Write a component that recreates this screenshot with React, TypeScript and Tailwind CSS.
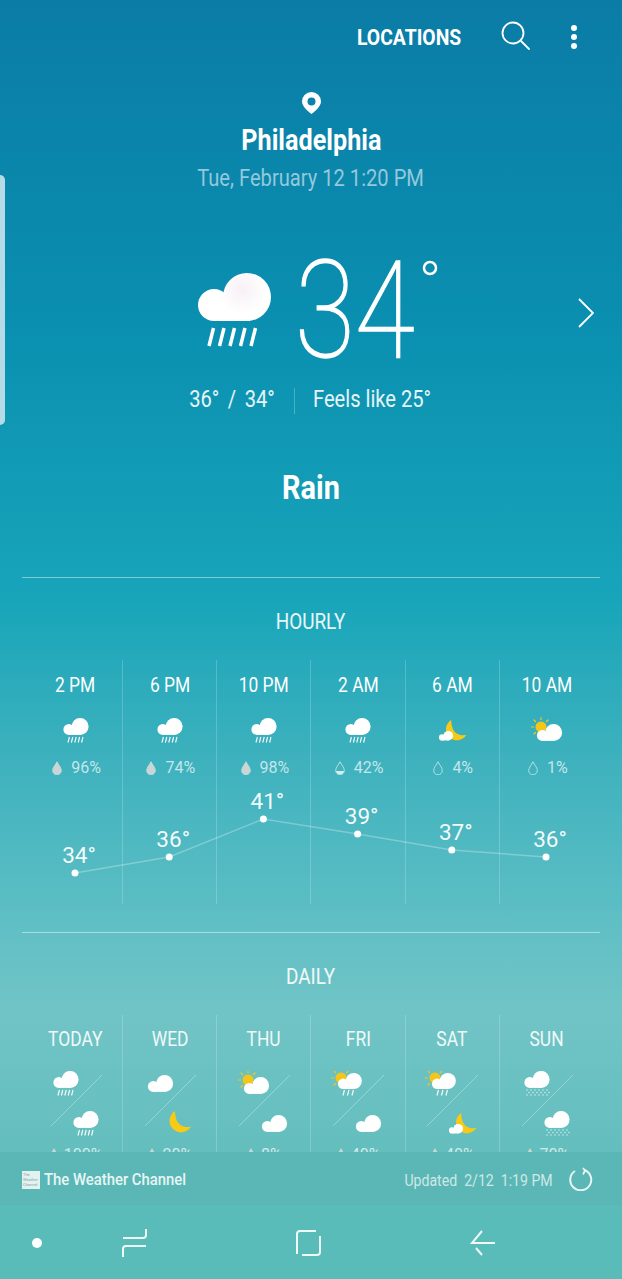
import type { ReactNode } from "react";

const hourly = [
  { time: "2 PM", icon: "rain", rain: "96%", drop: "full", temp: 34, y: 213 },
  { time: "6 PM", icon: "rain", rain: "74%", drop: "full", temp: 36, y: 197 },
  { time: "10 PM", icon: "rain", rain: "98%", drop: "full", temp: 41, y: 159 },
  { time: "2 AM", icon: "rain", rain: "42%", drop: "half", temp: 39, y: 174 },
  { time: "6 AM", icon: "moonCloud", rain: "4%", drop: "empty", temp: 37, y: 190 },
  { time: "10 AM", icon: "sunCloud", rain: "1%", drop: "empty", temp: 36, y: 197 },
];

const daily = [
  { day: "TODAY", top: "rain", bottom: "rain", rain: "100%" },
  { day: "WED", top: "cloud", bottom: "moon", rain: "20%" },
  { day: "THU", top: "sunCloud", bottom: "cloud", rain: "8%" },
  { day: "FRI", top: "sunRain", bottom: "cloud", rain: "40%" },
  { day: "SAT", top: "sunRain", bottom: "moonCloud", rain: "40%" },
  { day: "SUN", top: "snow", bottom: "snow", rain: "70%" },
];

// cloud drawn around a 25 wide, 17 high box
function Cloud({ x = 0, y = 0, s = 1 }: { x?: number; y?: number; s?: number }) {
  return (
    <g transform={`translate(${x} ${y}) scale(${s})`} fill="#fff">
      <circle cx="5.4" cy="11.4" r="5.5" />
      <circle cx="16.6" cy="8.4" r="8.5" />
      <rect x="5.4" y="9" width="12" height="7.900" />
    </g>
  );
}

function Sun({ x, y }: { x: number; y: number }) {
  return (
    <g transform={`translate(${x} ${y})`}>
      <circle cx="0" cy="0" r="5.500" fill="#f5c518" />
      <g stroke="#f5c518" strokeWidth="1.2" strokeLinecap="round">
        <path d="M0 -7.500V-9.500M-5.500 -5.500L-7 -7M5.500 -5.500L7 -7M-7.500 0H-9.500M-5.500 5.500L-7 7" />
      </g>
    </g>
  );
}

function Moon({ x, y, s = 1 }: { x: number; y: number; s?: number }) {
  return (
    <path
      transform={`translate(${x} ${y}) scale(${s})`}
      d="M6 0A11.500 11.500 0 1 0 22 15.500C15.500 17.500 10 14 8 10C6.500 6.500 6 3 6 0Z"
      fill="#f7cb15"
    />
  );
}

function Rain({ x, y, n = 5, gap = 3.4 }: { x: number; y: number; n?: number; gap?: number }) {
  return (
    <g stroke="#fff" strokeWidth="1.100" transform={`translate(${x} ${y})`}>
      {Array.from({ length: n }).map((_, i) => (
        <path key={i} d={`M${i * gap + 1} 5.500L${i * gap + 2.400} 0`} />
      ))}
    </g>
  );
}

function Glyph({ kind, x, y }: { kind: string; x: number; y: number }) {
  // x, y is the top left of a 32 x 32 cell
  let body: ReactNode = null;
  if (kind === "rain") {
    body = (
      <>
        <Cloud x={3.500} y={4} />
        <Rain x={7} y={23} />
      </>
    );
  }
  if (kind === "cloud") body = <Cloud x={4} y={8} />;
  if (kind === "moon") body = <Moon x={5} y={4} />;
  if (kind === "moonCloud") {
    body = (
      <>
        <Moon x={9.500} y={6} s={0.95} />
        <Cloud x={3} y={17} s={0.56} />
      </>
    );
  }
  if (kind === "sunCloud") {
    body = (
      <>
        <Sun x={10} y={13} />
        <Cloud x={6} y={10} />
      </>
    );
  }
  if (kind === "sunRain") {
    body = (
      <>
        <Sun x={9} y={11} />
        <Cloud x={6} y={6} s={0.95} />
        <Rain x={10} y={23} n={3} gap={4.500} />
      </>
    );
  }
  if (kind === "snow") {
    body = (
      <>
        <Cloud x={3.500} y={4} />
        <g fill="#fff" opacity="0.85">
          {[0, 1, 2, 3, 4, 5].map((i) => (
            <g key={i}>
              <circle cx={6 + i * 4} cy={23} r="0.65" />
              <circle cx={6 + i * 4} cy={28} r="0.65" />
              <circle cx={8 + i * 4} cy={25.500} r="0.65" />
            </g>
          ))}
        </g>
      </>
    );
  }
  return <g transform={`translate(${x} ${y})`}>{body}</g>;
}

function Drop({ type }: { type: string }) {
  const d = "M5 0.800C6.500 4 9.300 6.500 9.300 9.500A4.300 4.300 0 0 1 0.700 9.500C0.700 6.500 3.500 4 5 0.800Z";
  return (
    <svg width="10" height="14" viewBox="0 0 10 14">
      {type === "full" && <path d={d} fill="#c9d6d6" />}
      {type === "half" && <path d="M0.800 10H9.200A4.300 4.300 0 0 1 0.800 10Z" fill="#d4eeee" />}
      <path d={d} fill="none" stroke={type === "full" ? "#c9d6d6" : "#b4e0e4"} strokeWidth="1" />
    </svg>
  );
}

function SectionTitle({ children }: { children: ReactNode }) {
  return (
    <div className="h-[88px] border-t border-white/45 mx-[22px] flex justify-center pt-[30px]">
      <span className="inline-block font-['Roboto'] text-[22px] leading-[28px] text-white/90 scale-x-[.86] whitespace-nowrap">
        {children}
      </span>
    </div>
  );
}

function HourlyChart() {
  const points = hourly.map((h, i) => `${46 + i * 94.2},${h.y}`).join(" ");
  return (
    <div className="relative ml-[29px] mr-[28px] h-[244px] grid grid-cols-6">
      <svg className="absolute left-0 top-0 pointer-events-none" width="566" height="244">
        <polyline points={points} fill="none" stroke="#ffffff" strokeOpacity="0.28" strokeWidth="1.500" />
        {hourly.map((h, i) => (
          <circle key={h.time} cx={46 + i * 94.2} cy={h.y} r="3.500" fill="#fff" />
        ))}
      </svg>
      {hourly.map((h, i) => (
        <div key={h.time} className={`flex flex-col items-center pt-[13px] ${i < 5 ? "border-r border-white/20" : ""}`}>
          <span className="inline-block font-['Roboto'] text-[20px] leading-[24px] text-white scale-x-[.87] whitespace-nowrap">{h.time}</span>
          <svg width="32" height="32" viewBox="0 0 32 32" className="mt-[17px]">
            <Glyph kind={h.icon} x={0} y={0} />
          </svg>
          <div className="mt-[12px] flex items-center gap-[9px] h-[20px] ml-[2px]">
            <Drop type={h.drop} />
            <span className="font-['Roboto'] text-[16px] leading-[20px] text-white/70">{h.rain}</span>
          </div>
        </div>
      ))}
      {hourly.map((h, i) => (
        <span
          key={h.temp + h.time}
          className="absolute w-[94px] text-center font-['Roboto'] text-[22.500px] leading-[26px] text-white/95"
          style={{ left: i * 94.2 + 3, top: h.y - 31 }}
        >
          {h.temp}°
        </span>
      ))}
    </div>
  );
}

function DailyRow() {
  return (
    <div className="ml-[29px] mr-[28px] grid grid-cols-6">
      {daily.map((d, i) => (
        <div key={d.day} className={`flex flex-col items-center pt-[12px] h-[150px] ${i < 5 ? "border-r border-white/20" : ""}`}>
          <span className="inline-block font-['Roboto'] text-[20px] leading-[24px] text-white/90 scale-x-[.87] whitespace-nowrap">{d.day}</span>
          <svg width="72" height="72" viewBox="0 0 72 72" className="mt-[20px]">
            <path d="M11 55L62 4" stroke="#fff" strokeOpacity="0.3" strokeWidth="1" />
            <Glyph kind={d.top} x={10} y={-4} />
            <Glyph kind={d.bottom} x={30} y={36} />
          </svg>
          <div className="flex items-center gap-[5px] mt-[2px]">
            <Drop type="full" />
            <span className="font-['Roboto'] text-[16px] leading-[20px] text-white/70">{d.rain}</span>
          </div>
        </div>
      ))}
    </div>
  );
}

export default function App() {
  return (
    <div className="relative w-[622px] h-[1279px] overflow-hidden flex flex-col bg-[linear-gradient(180deg,#0b7ca6_0%,#0a8fb0_25%,#18a5ba_47%,#3ab0bd_58%,#5fbfc5_72%,#71c4c6_79%,#62bdbc_92%)] font-['Roboto']">
      {/* edge handle */}
      <div className="absolute left-0 top-[175px] w-[5px] h-[250px] rounded-r-[5px] bg-[#b5dbe6]" />

      <div className="flex-1 overflow-hidden">
        <div className="h-[74px] flex items-center justify-end pr-[44px]">
          <span className="inline-block font-['Roboto'] font-bold text-[22.500px] text-white scale-x-[.86] origin-right mr-[40px] whitespace-nowrap translate-y-[1px]">LOCATIONS</span>
          <svg width="30" height="30" viewBox="0 0 30 30" fill="none" stroke="#fff" strokeWidth="1.800" className="mr-[39px] -translate-y-[1px]">
            <circle cx="12" cy="12" r="10.500" />
            <path d="M20 20L28 28" strokeLinecap="round" />
          </svg>
          <svg width="8" height="26" viewBox="0 0 8 26" fill="#fff">
            <circle cx="4" cy="4" r="3" />
            <circle cx="4" cy="13" r="3" />
            <circle cx="4" cy="22" r="3" />
          </svg>
        </div>

        <div className="flex flex-col items-center">
          <svg width="19" height="22" viewBox="0 0 19 22" className="mt-[18px]">
            <path
              fillRule="evenodd"
              d="M9.500 0A9.500 9.500 0 0 1 19 9.500C19 14 14 18.500 9.500 22C5 18.500 0 14 0 9.500A9.500 9.500 0 0 1 9.500 0ZM9.500 5.500A4 4 0 1 0 9.500 13.500A4 4 0 1 0 9.500 5.500Z"
              fill="#fff"
            />
          </svg>
          <span className="mt-[8px] inline-block font-['Roboto'] font-bold text-[30px] leading-[36px] text-white scale-x-[.84] whitespace-nowrap">Philadelphia</span>
          <span className="mt-[3px] mb-[-1px] inline-block font-['Roboto'] text-[23px] leading-[36px] text-[#93c9dc] scale-x-[.875] whitespace-nowrap">Tue, February 12 1:20 PM</span>
        </div>

        <div className="relative h-[120px] mt-[54px]">
          <svg width="73" height="76" viewBox="0 0 73 76" className="absolute left-[198px] top-[23px]">
            <defs>
              <radialGradient id="puff" cx="0.4" cy="0.35" r="0.5">
                <stop offset="0" stopColor="#f7f0f5" />
                <stop offset="1" stopColor="#ffffff" />
              </radialGradient>
            </defs>
            <rect x="16" y="26" width="36" height="22" fill="#fff" />
            <circle cx="16" cy="32" r="16" fill="#fff" />
            <circle cx="49" cy="24" r="24" fill="url(#puff)" />
            <g stroke="#fff" strokeWidth="3.500">
              <path d="M11 73L15.500 55M21.500 73L26 55M32 73L36.500 55M42.500 73L47 55M53 73L57.500 55" />
            </g>
          </svg>
          <span className="absolute left-[295px] top-[1px] inline-block font-['Roboto'] font-thin text-[135px] leading-[120px] text-white [-webkit-text-stroke:1.5px_white] scale-x-[.81] origin-left">34</span>
          <svg width="16" height="16" viewBox="0 0 16 16" className="absolute left-[422px] top-[10px]" fill="none" stroke="#fff" strokeWidth="2.500">
            <circle cx="8" cy="8" r="6" />
          </svg>
          <svg width="16" height="30" viewBox="0 0 16 30" className="absolute left-[578px] top-[48px]" fill="none" stroke="#fff" strokeWidth="1.800">
            <path d="M1 1L15 15L1 29" />
          </svg>
        </div>

        <div className="mt-[17px] h-[27px] flex items-center">
          <div className="w-[294px] pr-[19px] flex justify-end">
            <span className="inline-block font-['Roboto'] text-[23px] text-white/90 scale-x-[.875] origin-right whitespace-nowrap [word-spacing:4px]">36° / 34°</span>
          </div>
          <div className="w-px h-[26px] bg-white/25" />
          <div className="pl-[18px]">
            <span className="inline-block font-['Roboto'] text-[23px] text-white/90 scale-x-[.875] origin-left whitespace-nowrap">Feels like 25°</span>
          </div>
        </div>

        <div className="mt-[53px] h-[40px] flex items-center justify-center">
          <span className="inline-block font-['Roboto'] font-bold text-[34px] text-white scale-x-[.85]">Rain</span>
        </div>

        <div className="mt-[70px]">
          <SectionTitle>HOURLY</SectionTitle>
          <div className="-mt-[5px]">
            <HourlyChart />
          </div>
        </div>

        <div className="mt-[28px]">
          <SectionTitle>DAILY</SectionTitle>
          <div className="-mt-[5px]">
            <DailyRow />
          </div>
        </div>
      </div>

      <div className="h-[53px] shrink-0 bg-[#5bb7b6] flex items-center pl-[22px] pr-[29px] pt-[4px]">
        <div className="w-[18px] h-[18px] bg-[#e3f1ef] flex flex-col justify-center overflow-hidden pl-[1px] -translate-y-[1px]">
          <span className="font-['Roboto'] text-[4px] leading-[5px] text-[#7fa7a8]">The</span>
          <span className="font-['Roboto'] text-[4px] leading-[5px] text-[#7fa7a8]">Weather</span>
          <span className="font-['Roboto'] text-[4px] leading-[5px] text-[#7fa7a8]">Channel</span>
        </div>
        <span className="ml-[4px] inline-block font-['Roboto'] font-medium text-[16.500px] text-[#e6f6f4] scale-x-[.9] origin-left whitespace-nowrap">The Weather Channel</span>
        <span className="ml-auto mr-[16px] inline-block font-['Roboto'] text-[17px] text-white/70 scale-x-[.83] origin-right whitespace-pre">Updated  2/12  1:19 PM</span>
        <svg width="24" height="24" viewBox="0 0 24 24" fill="none" stroke="#fff" strokeOpacity="0.85" strokeWidth="2" className="-translate-y-[2px]">
          <path d="M15.500 3A10.500 10.500 0 1 1 6 4" />
          <path d="M14 1L16 3.500L14 7.500" strokeWidth="1.800" />
        </svg>
      </div>

      <div className="relative h-[74px] shrink-0 bg-[#5abcb9]">
        <div className="absolute left-[32px] top-[33px] w-[10px] h-[10px] rounded-full bg-white" />
        <svg className="absolute left-[120px] top-[22px]" width="30" height="32" viewBox="0 0 30 32" fill="none" stroke="#fff" strokeOpacity="0.9" strokeWidth="2">
          <path d="M26 2V8Q26 11 23 11H3" />
          <path d="M3 30V22Q3 19 6 19H26" />
        </svg>
        <svg className="absolute left-[294px] top-[24px]" width="28" height="28" viewBox="0 0 28 28" fill="none" stroke="#fff" strokeOpacity="0.9" strokeWidth="2">
          <path d="M3 25V5Q3 2 6 2H22" />
          <path d="M26 7V23Q26 26 23 26H8" />
        </svg>
        <svg className="absolute left-[469px] top-[24px]" width="28" height="28" viewBox="0 0 28 28" fill="none" stroke="#fff" strokeOpacity="0.9" strokeWidth="2">
          <path d="M26 14H3L13 2" />
          <path d="M7 19L13 26" />
        </svg>
      </div>
    </div>
  );
}
